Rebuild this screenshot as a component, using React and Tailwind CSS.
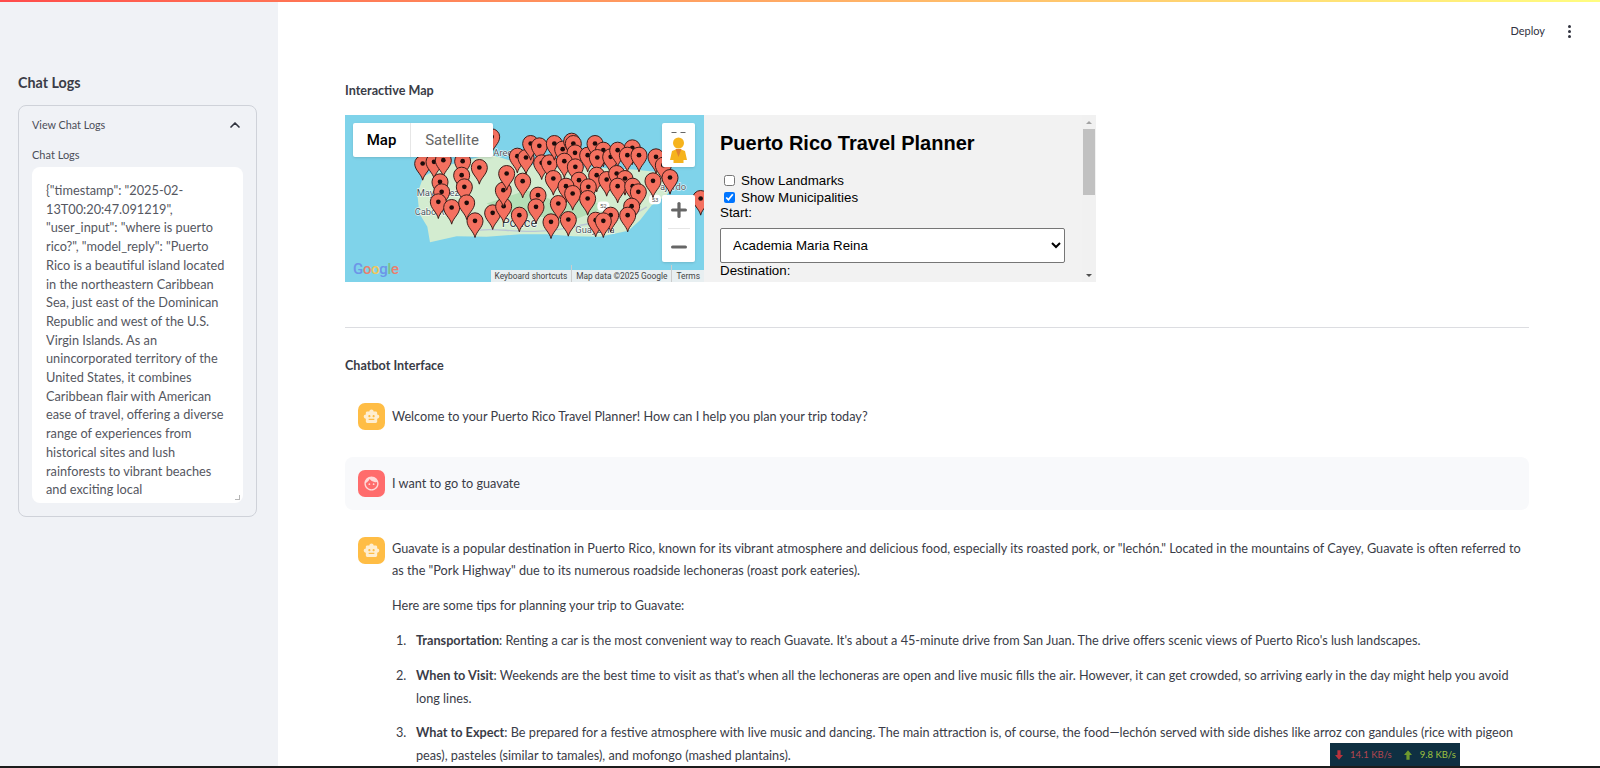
import React from 'react';
import { ChevronUp, Plus, Minus } from 'lucide-react';
import { MdSmartToy, MdFace } from 'react-icons/md';

const LOG_LINES = [
  '{"timestamp": "2025-02-',
  '13T00:20:47.091219",',
  '"user_input": "where is puerto',
  'rico?", "model_reply": "Puerto',
  'Rico is a beautiful island located',
  'in the northeastern Caribbean',
  'Sea, just east of the Dominican',
  'Republic and west of the U.S.',
  'Virgin Islands. As an',
  'unincorporated territory of the',
  'United States, it combines',
  'Caribbean flair with American',
  'ease of travel, offering a diverse',
  'range of experiences from',
  'historical sites and lush',
  'rainforests to vibrant beaches',
  'and exciting local',
];

// head centres, in the coordinates of the map's viewBox
const PINS = [
  [455, 170], [248, 250], [282, 245], [310, 240], [368, 243], [418, 262], [365, 285], [300, 305],
  [373, 320], [305, 335], [295, 365], [335, 382], [380, 368], [405, 422], [458, 398], [491, 378],
  [538, 405], [594, 345], [588, 380], [490, 330], [500, 280], [548, 303], [532, 228], [558, 232],
  [572, 190], [598, 197], [605, 248], [628, 248], [643, 190], [668, 207], [695, 183], [700, 190],
  [705, 218], [673, 243], [706, 260], [743, 225], [765, 190], [790, 210], [772, 232], [812, 230],
  [833, 210], [877, 203], [862, 225], [897, 225], [948, 230], [970, 255], [990, 292], [939, 302],
  [770, 285], [800, 298], [830, 280], [855, 295], [717, 300], [640, 295], [678, 318], [745, 320],
  [833, 318], [878, 318], [895, 335], [698, 340], [743, 355], [655, 370], [875, 378], [863, 405],
  [812, 405], [767, 420], [790, 422], [633, 425], [685, 418], [1082, 355],
];

function Pin({ x, y }) {
  return (
    <g transform={`translate(${x} ${y})`}>
      <path
        d="M0 50C-4 31-24 20-24 0A24 24 0 0 1 24 0C24 20 4 31 0 50Z"
        fill="#f4705f"
        stroke="#3a1d1a"
        strokeWidth="3"
      />
      <circle r="7" fill="#1c0c0b" />
    </g>
  );
}

function MapPanel() {
  return (
    <div className="relative w-[359px] h-full overflow-hidden bg-[#7fd3ea] shrink-0">
      <svg viewBox="15 105 1077 500" className="w-full h-full block">
        <path
          d="M250 290L300 262L380 240L450 222L540 250L640 262L760 262L880 268L960 276L1000 312L980 345L935 375L900 420L865 452L780 470L700 468L620 462L540 462L440 470L350 468L270 486L262 440L238 400L232 340Z"
          fill="#d3ecd0"
        />
        <path d="M560 330L640 360L720 350L800 380L700 420L600 410L500 400L440 370Z" fill="#b4dfb7" />
        <path d="M420 450C480 440 560 470 700 440S860 420 920 380" fill="none" stroke="#b9c6d6" strokeWidth="4" />
        <g fontFamily="Roboto, sans-serif" fill="#46565e" stroke="#ffffff" strokeWidth="3" paintOrder="stroke">
          <text x="230" y="349" fontSize="28">Mayagüez</text>
          <text x="224" y="405" fontSize="28">Cabo Rojo</text>
          <text x="460" y="228" fontSize="28">Arecibo</text>
          <text x="485" y="442" fontSize="38" fill="#37474f">Ponce</text>
          <text x="706" y="460" fontSize="28">Guayama</text>
          <text x="945" y="330" fontSize="28">Fajardo</text>
        </g>
        <g fontFamily="Roboto, sans-serif" fontSize="18" textAnchor="middle" fill="#555555">
          <rect x="772" y="364" width="36" height="28" rx="12" fill="#ffffff" />
          <text x="790" y="385">52</text>
          <rect x="927" y="344" width="36" height="28" rx="12" fill="#ffffff" />
          <text x="945" y="365">53</text>
        </g>
        {PINS.map(([x, y]) => (
          <Pin key={`${x}-${y}`} x={x} y={y} />
        ))}
      </svg>

      {/* Map / Satellite */}
      <div className="absolute left-[8px] top-[8px] h-[34px] flex bg-white rounded-[2px] shadow-sm font-['Roboto',sans-serif] text-[15px]">
        <div className="w-[58px] flex items-center justify-center font-medium text-black border-r border-[#e6e6e6]">Map</div>
        <div className="w-[82px] flex items-center justify-center text-[#666666]">Satellite</div>
      </div>

      {/* Pegman */}
      <div className="absolute right-[9px] top-[8px] w-[33px] h-[44px] bg-white rounded-[2px] shadow-sm">
        <svg viewBox="0 0 33 44" className="w-[33px] h-[44px]">
          <path d="M9.500 9.500h5M18.500 9.500h5" stroke="#666666" strokeWidth="1" />
          <circle cx="16.500" cy="20" r="5.500" fill="#f6b31c" />
          <path d="M10 28q6.500-3.500 13 0l2 9h-3.500v3h-10v-3H8z" fill="#f6b31c" />
          <path d="M13.500 26l3 8 3-8z" fill="#e2832e" />
        </svg>
      </div>

      {/* Zoom */}
      <div className="absolute right-[9px] top-[80px] w-[33px] h-[67px] bg-white rounded-[2px] shadow-sm flex flex-col items-center justify-around text-[#666666]">
        <Plus className="w-[22px] h-[22px]" strokeWidth={3.5} />
        <div className="w-[22px] border-t border-[#e6e6e6]" />
        <Minus className="w-[22px] h-[22px]" strokeWidth={3.5} />
      </div>

      {/* Google */}
      <div className="absolute left-[8px] bottom-[2px] font-['Roboto',sans-serif] text-[15px] font-medium tracking-[-0.3px]">
        <span className="text-[#6d95e8]">G</span>
        <span className="text-[#e9806f]">o</span>
        <span className="text-[#f0c75a]">o</span>
        <span className="text-[#6d95e8]">g</span>
        <span className="text-[#7cc08a]">l</span>
        <span className="text-[#e9806f]">e</span>
      </div>

      {/* Attribution */}
      <div className="absolute right-0 bottom-0 h-[12px] flex items-center bg-[#e8eff1] font-['Roboto',sans-serif] text-[8.400px] text-[#444444] whitespace-nowrap">
        <span className="px-[4px]">Keyboard shortcuts</span>
        <span className="px-[4px] border-l border-[#cccccc]">Map data ©2025 Google</span>
        <span className="px-[4px] border-l border-[#cccccc]">Terms</span>
      </div>
    </div>
  );
}

function PlannerPanel() {
  return (
    <div className="relative flex-1 h-full overflow-hidden bg-[#f2f2f2] font-['Liberation_Sans',sans-serif] text-[13.330px] leading-[16px] text-black">
      <div className="pl-[16px] pt-[16px] w-[377px]">
        <h1 className="text-[20px] leading-[24px] font-bold">Puerto Rico Travel Planner</h1>
        <label className="flex items-center mt-[17px] h-[17px] pl-[4px]">
          <input type="checkbox" readOnly className="w-[11px] h-[11px] mr-[6px]" />
          Show Landmarks
        </label>
        <label className="flex items-center h-[17px] pl-[4px]">
          <input type="checkbox" defaultChecked className="w-[11px] h-[11px] mr-[6px]" />
          Show Municipalities
        </label>
        <div className="h-[15px] leading-[14px]">Start:</div>
        <select className="block w-[345px] h-[35px] mt-[7px] pl-[8px] bg-white border border-[#767676] rounded-[2px] text-[13.330px] appearance-auto">
          <option>Academia Maria Reina</option>
        </select>
        <div className="leading-[16px]">Destination:</div>
      </div>

      {/* scrollbar */}
      <div className="absolute right-0 top-0 bottom-0 w-[14px] flex flex-col items-center bg-[#f1f1f1]">
        <div className="h-[14px] flex items-center">
          <div className="w-0 h-0 border-x-[3px] border-x-transparent border-b-[3px] border-b-[#a3a3a3]" />
        </div>
        <div className="w-[12px] h-[66px] bg-[#c1c1c1]" />
        <div className="flex-1" />
        <div className="h-[14px] flex items-center">
          <div className="w-0 h-0 border-x-[3px] border-x-transparent border-t-[3px] border-t-[#505050]" />
        </div>
      </div>
    </div>
  );
}

function Avatar({ user }) {
  return (
    <div className={`w-[27px] h-[27px] rounded-[7px] shrink-0 flex items-center justify-center text-white/75 ${user ? 'bg-[#ff6c6c]' : 'bg-[#ffbd45]'}`}>
      {user ? <MdFace className="w-[17px] h-[17px]" /> : <MdSmartToy className="w-[17px] h-[17px]" />}
    </div>
  );
}

function ChatRow({ user, children }) {
  return (
    <div className={`flex gap-[7px] p-[13px] rounded-[8px] ${user ? 'bg-[#f8f9fb]' : ''}`}>
      <Avatar user={user} />
      <div className="flex-1 min-w-0 whitespace-nowrap">{children}</div>
    </div>
  );
}

function ListItem({ n, title, children }) {
  return (
    <div className="flex mt-[12.500px]">
      <span className="w-[24px] pl-[4px] shrink-0">{n}.</span>
      <div>
        <b className="font-bold">{title}</b>
        {children}
      </div>
    </div>
  );
}

export default function App() {
  return (
    <div className="relative w-[1600px] h-[768px] overflow-hidden bg-white font-['Lato',sans-serif] text-[#3a3c47] text-[12.700px] leading-[22.4px] flex flex-col">
      <div className="h-[2px] shrink-0 bg-gradient-to-r from-[#ff4b4b] to-[#fffd80]" />

      <div className="flex flex-1 min-h-0">
        {/* Sidebar */}
        <aside className="w-[278px] shrink-0 bg-[#f0f2f6] pl-[18px] pr-[21px] pt-[71px]">
          <h2 className="text-[14.300px] leading-[20px] font-bold">Chat Logs</h2>
          <div className="mt-[12px] h-[412px] rounded-[8px] border border-[#cfd2d9] px-[13px]">
            <div className="h-[38px] flex items-center justify-between text-[10.800px] text-[#4b4e59]">
              <span>View Chat Logs</span>
              <ChevronUp className="w-[16px] h-[16px] text-[#31333f]" strokeWidth={2.5} />
            </div>
            <div className="text-[11px] leading-[20px] text-[#4b4e59] mt-[1px]">Chat Logs</div>
            <div className="relative mt-[2px] h-[336px] bg-white rounded-[8px] pl-[14px] pt-[14px] overflow-hidden text-[#55575f] text-[12.750px] leading-[18.700px] whitespace-nowrap">
              {LOG_LINES.map((line) => (
                <div key={line}>{line}</div>
              ))}
              <div className="absolute right-[3px] bottom-[3px] w-[5px] h-[5px] border-r border-b border-[#b5b5b5]" />
            </div>
          </div>
        </aside>

        {/* Main */}
        <main className="flex-1 min-w-0 pl-[67px] pr-[71px]">
          <header className="h-[58px] flex items-center justify-end mr-[-71px] pr-[29px]">
            <span className="text-[11px] text-[#31333f] mr-[23px]">Deploy</span>
            <div className="flex flex-col gap-[2px]">
              <span className="w-[3px] h-[3px] rounded-full bg-[#31333f]" />
              <span className="w-[3px] h-[3px] rounded-full bg-[#31333f]" />
              <span className="w-[3px] h-[3px] rounded-full bg-[#31333f]" />
            </div>
          </header>

          <h3 className="mt-[22px] text-[12.600px] leading-[18px] font-bold">Interactive Map</h3>

          <div className="mt-[15px] w-[751px] h-[167px] flex">
            <MapPanel />
            <PlannerPanel />
          </div>

          <hr className="mt-[45px] border-t border-[#dcdde1]" />

          <h3 className="mt-[29px] text-[12.600px] leading-[18px] font-bold">Chatbot Interface</h3>

          <div className="mt-[15px] flex flex-col gap-[14px]">
            <ChatRow>
              <div className="pt-[2px]">Welcome to your Puerto Rico Travel Planner! How can I help you plan your trip today?</div>
            </ChatRow>
            <ChatRow user>
              <div className="pt-[2px]">I want to go to guavate</div>
            </ChatRow>
            <ChatRow>
              <div>Guavate is a popular destination in Puerto Rico, known for its vibrant atmosphere and delicious food, especially its roasted pork, or "lechón." Located in the mountains of Cayey, Guavate is often referred to</div>
              <div>as the "Pork Highway" due to its numerous roadside lechoneras (roast pork eateries).</div>
              <div className="mt-[12.500px]">Here are some tips for planning your trip to Guavate:</div>
              <ListItem n={1} title="Transportation">
                : Renting a car is the most convenient way to reach Guavate. It's about a 45-minute drive from San Juan. The drive offers scenic views of Puerto Rico's lush landscapes.
              </ListItem>
              <ListItem n={2} title="When to Visit">
                : Weekends are the best time to visit as that's when all the lechoneras are open and live music fills the air. However, it can get crowded, so arriving early in the day might help you avoid
                <br />
                long lines.
              </ListItem>
              <ListItem n={3} title="What to Expect">
                : Be prepared for a festive atmosphere with live music and dancing. The main attraction is, of course, the food—lechón served with side dishes like arroz con gandules (rice with pigeon
                <br />
                peas), pasteles (similar to tamales), and mofongo (mashed plantains).
              </ListItem>
            </ChatRow>
          </div>
        </main>
      </div>

      {/* dark strip along the bottom edge of the screen */}
      <div className="absolute left-0 right-0 bottom-0 h-[2px] bg-[#1c1c1c]" />

      {/* Network speed widget on top of the page */}
      <div className="absolute left-[1330px] bottom-[2px] w-[130px] h-[23px] bg-[#0f3042] flex items-center pl-[4px] text-[9.500px] leading-none whitespace-nowrap">
        <svg viewBox="0 0 10 12" className="w-[8px] h-[10px] ml-[1px] text-[#b8323c]">
          <path d="M3 0h4v6h3l-5 6-5-6h3z" fill="currentColor" />
        </svg>
        <span className="ml-[7px] text-[#b5464f]">14.1 KB/s</span>
        <svg viewBox="0 0 10 12" className="w-[8px] h-[10px] ml-[12px] text-[#6f9a2e]">
          <path d="M3 12h4V6h3L5 0 0 6h3z" fill="currentColor" />
        </svg>
        <span className="ml-[8px] text-[#9fc23f]">9.8 KB/s</span>
      </div>
    </div>
  );
}
